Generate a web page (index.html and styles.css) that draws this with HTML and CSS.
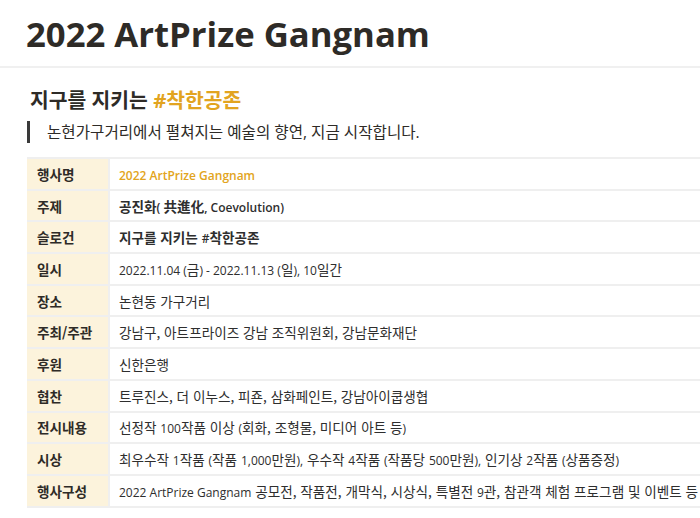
FILE: index.html
```html
<!DOCTYPE html>
<html lang="ko">
<head>
<meta charset="utf-8">
<link rel="stylesheet" href="styles.css">
</head>
<body>
<header class="top">
  <h1 class="title">2022 ArtPrize Gangnam</h1>
</header>
<main class="content">
  <h2 class="sub">지구를 지키는 <span class="hl">#착한공존</span></h2>
  <blockquote class="quote">논현가구거리에서 펼쳐지는 예술의 향연, 지금 시작합니다.</blockquote>
  <table class="info">
    <tr><th>행사명</th><td class="gold"><span class="n">2022 ArtPrize Gangnam</span></td></tr>
    <tr><th>주제</th><td class="strong">공진화<span class="n">( </span>共進化<span class="n">, Coevolution)</span></td></tr>
    <tr><th>슬로건</th><td class="strong">지구를 지키는 <span class="n">#</span>착한공존</td></tr>
    <tr><th>일시</th><td><span class="n">2022.11.04 (</span>금<span class="n">) - 2022.11.13 (</span>일<span class="n">), 10</span>일간</td></tr>
    <tr><th>장소</th><td>논현동 가구거리</td></tr>
    <tr><th>주최/주관</th><td>강남구, 아트프라이즈 강남 조직위원회, 강남문화재단</td></tr>
    <tr><th>후원</th><td>신한은행</td></tr>
    <tr><th>협찬</th><td>트루진스, 더 이누스, 피죤, 삼화페인트, 강남아이쿱생협</td></tr>
    <tr><th>전시내용</th><td>선정작 <span class="n">100</span>작품 이상 <span class="n">(</span>회화, 조형물, 미디어 아트 등<span class="n">)</span></td></tr>
    <tr><th>시상</th><td>최우수작 <span class="n">1</span>작품 <span class="n">(</span>작품 <span class="n">1,000</span>만원<span class="n">),</span> 우수작 <span class="n">4</span>작품 <span class="n">(</span>작품당 <span class="n">500</span>만원<span class="n">),</span> 인기상 <span class="n">2</span>작품 <span class="n">(</span>상품증정<span class="n">)</span></td></tr>
    <tr><th>행사구성</th><td><span class="n">2022 ArtPrize Gangnam</span> 공모전, 작품전, 개막식, 시상식, 특별전 <span class="n">9</span>관, 참관객 체험 프로그램 및 이벤트 등</td></tr>
  </table>
</main>
</body>
</html>
```
FILE: styles.css
```css
html, body {
  margin: 0;
  padding: 0;
  background: #fff;
  overflow: hidden;
}
body {
  font-family: "Open Sans", "Noto Sans CJK KR", sans-serif;
  color: #333;
}
.top {
  border-bottom: 2px solid #f0f0f0;
  padding: 12px 0 10px 26px;
}
.title {
  margin: 0;
  font-size: 34.7px;
  font-weight: 700;
  line-height: 44px;
  color: #2e2b27;
}
.content {
  padding: 18px 0 0 27px;
}
.sub {
  margin: 0 0 0 3px;
  font-size: 20.4px;
  font-weight: 700;
  line-height: 28px;
  color: #2e2b27;
}
.hl {
  color: #e2a420;
}
.quote {
  margin: 7px 0 14px 0;
  padding: 0 0 0 17px;
  border-left: 3px solid #3a3a3a;
  font-size: 15.6px;
  line-height: 22px;
  color: #2e2b27;
}
.info {
  width: 720px;
  border-collapse: collapse;
  font-family: "Noto Sans CJK KR", sans-serif;
  font-size: 13.6px;
}
.info th, .info td {
  border-top: 2px solid #efefef;
  border-bottom: 2px solid #efefef;
  height: 29.7px;
  padding: 0 9px 0 10px;
  text-align: left;
  white-space: nowrap;
}
.info th {
  width: 62px;
  background: #fcf3dc;
  font-weight: 700;
  border-right: 2px solid #efefef;
  color: #2e2b27;
}
.info td {
  font-weight: 400;
  padding-left: 9px;
  color: #2e2e2e;
}
.info .n {
  font-family: "Open Sans", sans-serif;
  font-size: 12px;
}
.info td.gold {
  color: #e2a420;
  font-weight: 700;
}
.info td.gold .n,
.info td.strong .n {
  font-weight: 600;
}
.info td.strong {
  font-weight: 700;
}
```
